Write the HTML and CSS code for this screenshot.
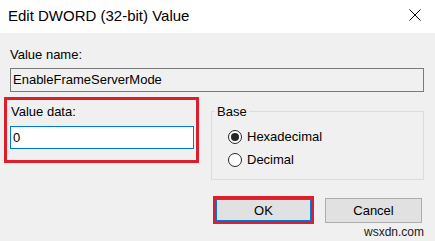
FILE: index.html
```html
<!DOCTYPE html>
<html>
<head>
<meta charset="utf-8">
<link rel="stylesheet" href="styles.css">
</head>
<body>
<div class="dialog">
  <div class="titlebar">
    <span class="title">Edit DWORD (32-bit) Value</span>
    <svg class="close" width="12" height="12" viewBox="0 0 12 12"><path d="M0.5 0.5L11.5 11.5M11.5 0.5L0.5 11.5" stroke="#000" stroke-width="1" fill="none"/></svg>
  </div>
  <div class="content">
    <div class="label name-label">Value name:</div>
    <div class="namebox">EnableFrameServerMode</div>
    <div class="row">
      <div class="highlight data">
        <div class="label">Value data:</div>
        <div class="input">0</div>
      </div>
      <fieldset class="base">
        <legend>Base</legend>
        <div class="radio-row"><span class="radio checked"></span><span>Hexadecimal</span></div>
        <div class="radio-row"><span class="radio"></span><span>Decimal</span></div>
      </fieldset>
    </div>
    <div class="buttons">
      <div class="highlight okwrap"><div class="btn ok">OK</div></div>
      <div class="btn cancel">Cancel</div>
    </div>
    <div class="watermark">wsxdn.com</div>
  </div>
</div>
</body>
</html>
```
FILE: styles.css
```css
* { box-sizing: border-box; }
html, body { margin: 0; padding: 0; }
body {
  width: 435px;
  height: 241px;
  overflow: hidden;
  background: #f0f0f0;
  font-family: "Liberation Sans", Arial, sans-serif;
  font-size: 13px;
  line-height: 15px;
  color: #000;
}
.titlebar {
  height: 33px;
  background: #fff;
  display: flex;
  justify-content: space-between;
  align-items: flex-start;
  padding: 7px 14px 0 8px;
}
.title { font-size: 15px; line-height: 17px; }
.close { margin-top: 2px; }
.content { padding: 0 11px 0 4px; }
.name-label { margin: 14px 0 0 6px; }
.namebox {
  margin: 6px 0 0 6px;
  height: 24px;
  border: 1px solid #7a7a7a;
  background: #f0f0f0;
  line-height: 22px;
  padding-left: 2px;
}
.row {
  display: flex;
  align-items: flex-start;
  margin-top: 5px;
}
.highlight { border: 3px solid #de1f2b; }
.data {
  width: 195px;
  flex: none;
  padding: 4px 2px 11px 3px;
}
.data .label { padding-left: 1px; }
.input {
  margin-top: 7px;
  height: 23px;
  border: 1px solid #0078d7;
  background: #fff;
  line-height: 21px;
  padding-left: 2px;
}
.base {
  margin: 7px 0 0 12px;
  padding: 0;
  width: 213px;
  flex: none;
  height: 76px;
  border: 1px solid #dcdcdc;
  min-width: 0;
}
.base legend {
  margin-left: 3px;
  padding: 0 2px;
  line-height: 15px;
}
.radio-row {
  display: flex;
  align-items: center;
  height: 23px;
  gap: 5px;
  padding-left: 16px;
}
.base .radio-row:first-of-type { margin-top: 6px; }
.radio {
  width: 14px;
  height: 14px;
  border: 1px solid #262626;
  border-radius: 50%;
  background: #fff;
  display: flex;
  align-items: center;
  justify-content: center;
}
.radio.checked::after {
  content: "";
  width: 8px;
  height: 8px;
  border-radius: 50%;
  background: #262626;
}
.buttons {
  display: flex;
  align-items: center;
  justify-content: flex-end;
  gap: 11px;
  margin-top: 16px;
  padding-right: 2px;
}
.btn {
  display: flex;
  align-items: center;
  justify-content: center;
  background: #e1e1e1;
}
.ok {
  width: 95px;
  height: 22px;
  border: 1px solid #0078d7;
}
.cancel {
  width: 97px;
  height: 25px;
  border: 1px solid #adadad;
}
.watermark {
  text-align: right;
  font-size: 12px;
  line-height: 14px;
  color: #1a1a1a;
  margin-top: 1px;
}
```
